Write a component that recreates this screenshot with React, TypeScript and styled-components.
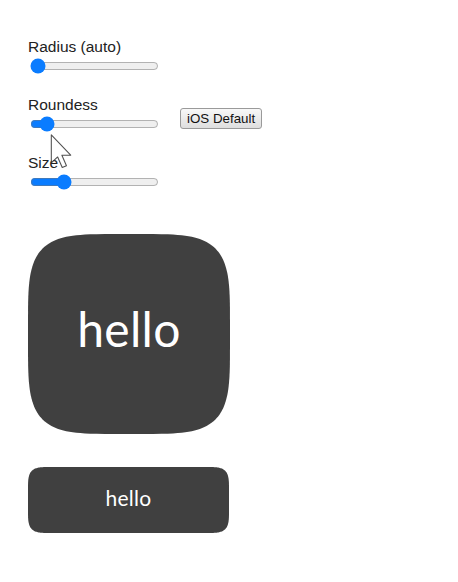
import React from "react";
import styled, { createGlobalStyle } from "styled-components";

const Global = createGlobalStyle`
  html, body { margin: 0; padding: 0; background: #ffffff; }
  body { margin: 8px; font-family: "Liberation Sans", Arial, sans-serif; }
`;

const Page = styled.div`
  position: relative;
  padding: 30px 0 0 20px;
  display: flex;
  flex-direction: column;
`;

const Controls = styled.div`
  display: flex;
  flex-direction: column;
  gap: 20px;
`;

const Row = styled.div`
  display: flex;
  align-items: flex-end;
  gap: 19px;
`;

const Field = styled.label`
  display: flex;
  flex-direction: column;
  width: 133px;
  font-size: 15.5px;
  line-height: 18px;
  color: #222;
`;

const Range = styled.input.attrs({ type: "range" })`
  width: 129px;
  height: 16px;
  margin: 2px;
  accent-color: #0a7cff;
`;

const Button = styled.button`
  margin-bottom: 5px;
  height: 21px;
  padding: 0 6px;
  font-family: "Liberation Sans", Arial, sans-serif;
  font-size: 13.33px;
  color: #111;
  background: linear-gradient(#f8f8f8, #dedede);
  border: 1px solid #9a9a9a;
  border-radius: 3px;
  white-space: nowrap;
`;

const Shapes = styled.div`
  display: flex;
  flex-direction: column;
  align-items: flex-start;
  gap: 33px;
  margin-top: 42px;
`;

const Tile = styled.div<{ $w: number; $h: number; $fs: number; $lift: number }>`
  box-sizing: border-box;
  width: ${(p) => p.$w}px;
  height: ${(p) => p.$h}px;
  padding-bottom: ${(p) => p.$lift}px;
  background: #404040;
  color: #ffffff;
  display: flex;
  align-items: center;
  justify-content: center;
  font-family: Lato, "Open Sans", sans-serif;
  font-size: ${(p) => p.$fs}px;
  font-weight: 400;
  letter-spacing: 0.3px;
`;

const Cursor = styled.svg`
  position: absolute;
  left: 41px;
  top: 125px;
  width: 24px;
  height: 37px;
  opacity: 0.85;
  pointer-events: none;
`;

function squircle(w: number, h: number, r: number, n: number): string {
  const pts: string[] = [];
  const steps = 40;
  const corners: [number, number, number][] = [
    [w - r, h - r, 0],
    [r, h - r, Math.PI / 2],
    [r, r, Math.PI],
    [w - r, r, (3 * Math.PI) / 2],
  ];
  for (const [cx, cy, a0] of corners) {
    for (let i = 0; i <= steps; i++) {
      const t = a0 + (i / steps) * (Math.PI / 2);
      const c = Math.cos(t);
      const s = Math.sin(t);
      const x = cx + r * Math.sign(c) * Math.pow(Math.abs(c), 2 / n);
      const y = cy + r * Math.sign(s) * Math.pow(Math.abs(s), 2 / n);
      pts.push(`${x.toFixed(2)}px ${y.toFixed(2)}px`);
    }
  }
  return `polygon(${pts.join(", ")})`;
}

export default function App() {
  const big = squircle(202, 200, 100, 4.4);
  const small = squircle(201, 66, 24, 4);
  return (
    <>
      <Global />
      <Page>
        <Controls>
          <Field>
            Radius (auto)
            <Range min={0} max={100} defaultValue={0} />
          </Field>
          <Row>
            <Field>
              Roundess
              <Range min={0} max={100} defaultValue={8} />
            </Field>
            <Button>iOS Default</Button>
          </Row>
          <Field>
            Size
            <Range min={0} max={100} defaultValue={23} />
          </Field>
        </Controls>
        <Shapes>
          <Tile $w={202} $h={200} $fs={48} $lift={12} style={{ clipPath: big }}>
            hello
          </Tile>
          <Tile $w={201} $h={66} $fs={21} $lift={6} style={{ clipPath: small }}>
            hello
          </Tile>
        </Shapes>
        <Cursor viewBox="0 0 13 21">
          <path
            d="M1 1 L1 17 L4.6 13.6 L7.2 19.6 L9.6 18.6 L7 12.6 L12 12.6 Z"
            fill="#ffffff"
            stroke="#333"
            strokeWidth="0.6"
            strokeLinejoin="round"
          />
        </Cursor>
      </Page>
    </>
  );
}
